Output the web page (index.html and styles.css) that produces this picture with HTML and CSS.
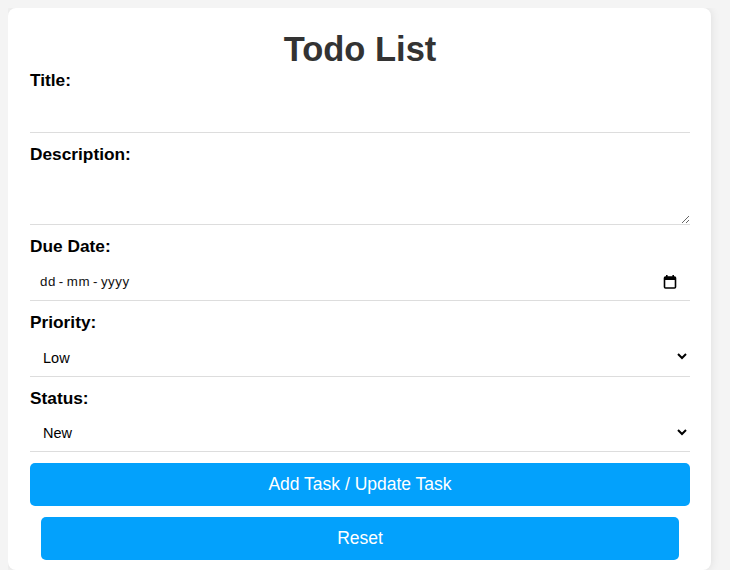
FILE: index.html
```html
<!DOCTYPE html>
<html lang="en-GB">
<head>
<meta charset="utf-8">
<title>Todo List</title>
<link rel="stylesheet" href="styles.css">
</head>
<body>
<div class="card">
  <h1 class="title">Todo List</h1>
  <form class="form">
    <label class="label" for="title">Title:</label>
    <input class="field field-title" id="title" type="text">

    <label class="label" for="desc">Description:</label>
    <textarea class="field field-desc" id="desc"></textarea>

    <label class="label" for="due">Due Date:</label>
    <div class="field field-date" id="due" role="textbox" tabindex="0">
      <span class="date-text"><span>dd</span><span class="sep">-</span><span>mm</span><span class="sep">-</span><span>yyyy</span></span>
      <svg class="cal-icon" width="14" height="15" viewBox="0 0 14 15" aria-hidden="true">
        <rect x="1.5" y="3" width="11" height="11" rx="1" fill="none" stroke="#000" stroke-width="1.6"/>
        <rect x="1.5" y="3" width="11" height="3" fill="#000"/>
        <rect x="3" y="1" width="1.6" height="2.5" fill="#000"/>
        <rect x="9.4" y="1" width="1.6" height="2.5" fill="#000"/>
      </svg>
    </div>

    <label class="label" for="priority">Priority:</label>
    <select class="field field-select" id="priority">
      <option>Low</option>
      <option>Medium</option>
      <option>High</option>
    </select>

    <label class="label" for="status">Status:</label>
    <select class="field field-select field-last" id="status">
      <option>New</option>
      <option>In Progress</option>
      <option>Completed</option>
    </select>

    <button class="btn btn-main" type="button">Add Task / Update Task</button>
    <button class="btn btn-reset" type="reset">Reset</button>
  </form>
</div>
</body>
</html>
```

FILE: styles.css
```css
html, body {
  background: #f4f4f4;
}
body {
  margin: 8px;
  font-family: "Liberation Sans", Arial, sans-serif;
}
.card {
  width: 703px;
  box-sizing: border-box;
  background: #fff;
  border-radius: 8px;
  box-shadow: 0 0 10px rgba(0, 0, 0, 0.1);
  padding: 21px 21px 10px 22px;
}
.title {
  margin: 0 0 2px;
  font-size: 34.5px;
  line-height: 40px;
  font-weight: bold;
  color: #333;
  text-align: center;
}
.form {
  display: flex;
  flex-direction: column;
}
.label {
  display: block;
  font-size: 17.3px;
  line-height: 18px;
  font-weight: bold;
  color: #000;
}
.field {
  display: block;
  box-sizing: border-box;
  width: 100%;
  margin: 5px 0 12px;
  padding: 0 10px;
  border: none;
  border-bottom: 1px solid #ddd;
  background: #fff;
  font-family: "Liberation Sans", Arial, sans-serif;
  font-size: 13.33px;
  color: #000;
  outline: none;
}
.field-title {
  height: 39px;
}
.field-desc {
  height: 57px;
  padding-top: 8px;
  resize: vertical;
}
.field-date {
  height: 41px;
  padding: 3px 13px 0 10px;
  display: flex;
  align-items: center;
  justify-content: space-between;
}
.date-text {
  display: flex;
  align-items: center;
  letter-spacing: 0.5px;
  color: #111;
}
.sep {
  margin: 0 3px;
}
.cal-icon {
  display: block;
  margin-bottom: 1px;
}
.field-select {
  height: 41px;
  padding: 3px 8px 0 9px;
  font-size: 14.5px;
}
.field-last {
  height: 40px;
  margin-bottom: 11px;
}
.btn {
  display: block;
  box-sizing: border-box;
  height: 43px;
  border: none;
  border-radius: 5px;
  background: #03a1fc;
  color: #fff;
  font-family: "Liberation Sans", Arial, sans-serif;
  font-size: 17.5px;
  cursor: pointer;
}
.btn-main {
  width: 100%;
  margin: 0 0 11px;
}
.btn-reset {
  margin: 0 11px;
  width: calc(100% - 22px);
}
```
